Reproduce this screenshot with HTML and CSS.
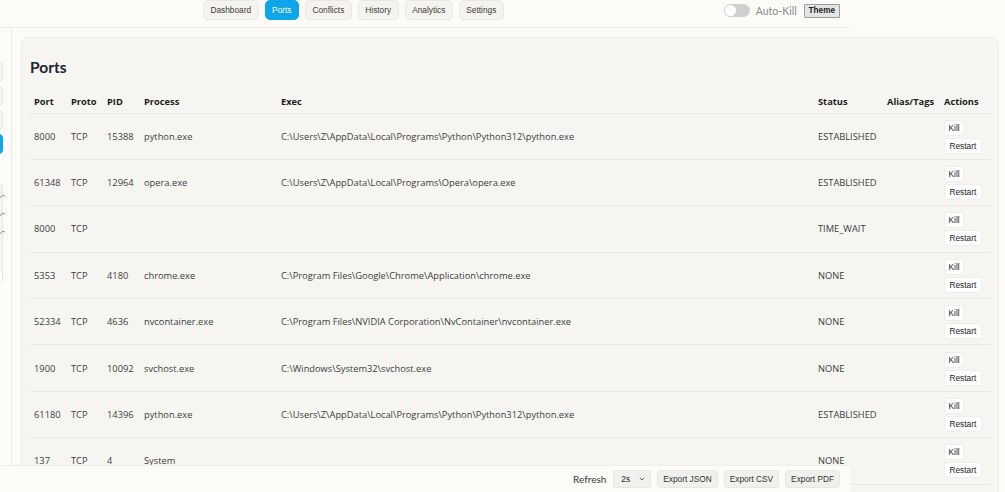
FILE: index.html
```html
<!DOCTYPE html>
<html>
<head>
<meta charset="utf-8">
<link rel="stylesheet" href="styles.css">
</head>
<body>
<header class="topbar">
  <nav class="tabs">
    <button class="tab">Dashboard</button>
    <button class="tab active">Ports</button>
    <button class="tab">Conflicts</button>
    <button class="tab">History</button>
    <button class="tab">Analytics</button>
    <button class="tab">Settings</button>
  </nav>
  <div class="controls">
    <span class="toggle"><span class="knob"></span></span>
    <span class="autokill">Auto-Kill</span>
    <button class="theme">Theme</button>
  </div>
</header>
<div class="layout">
  <aside class="sidebar">
    <div class="side-inner">
      <div class="side-btn"></div>
      <div class="side-btn"></div>
      <div class="side-btn"></div>
      <div class="side-btn on"></div>
      <div class="side-box">
        <svg class="chev" width="8" height="8" viewBox="0 0 8 8"><path d="M1 6 Q4 1 7 3" fill="none" stroke="#888" stroke-width="1"/></svg>
        <svg class="chev" width="8" height="8" viewBox="0 0 8 8"><path d="M1 6 Q4 1 7 3" fill="none" stroke="#888" stroke-width="1"/></svg>
        <svg class="chev" width="8" height="8" viewBox="0 0 8 8"><path d="M1 6 Q4 1 7 3" fill="none" stroke="#888" stroke-width="1"/></svg>
        <div class="side-foot"></div>
      </div>
    </div>
  </aside>
  <main class="main">
    <section class="card">
      <h2 class="title">Ports</h2>
      <table class="ports">
        <colgroup>
          <col class="c-port"><col class="c-proto"><col class="c-pid"><col class="c-proc"><col class="c-exec"><col class="c-status"><col class="c-alias"><col class="c-act">
        </colgroup>
        <thead>
          <tr><th>Port</th><th>Proto</th><th>PID</th><th>Process</th><th>Exec</th><th>Status</th><th>Alias/Tags</th><th>Actions</th></tr>
        </thead>
        <tbody>
          <tr><td>8000</td><td>TCP</td><td>15388</td><td>python.exe</td><td>C:\Users\Z\AppData\Local\Programs\Python\Python312\python.exe</td><td>ESTABLISHED</td><td></td><td class="act"><button class="kill">Kill</button><button class="restart">Restart</button></td></tr>
          <tr><td>61348</td><td>TCP</td><td>12964</td><td>opera.exe</td><td>C:\Users\Z\AppData\Local\Programs\Opera\opera.exe</td><td>ESTABLISHED</td><td></td><td class="act"><button class="kill">Kill</button><button class="restart">Restart</button></td></tr>
          <tr><td>8000</td><td>TCP</td><td></td><td></td><td></td><td>TIME_WAIT</td><td></td><td class="act"><button class="kill">Kill</button><button class="restart">Restart</button></td></tr>
          <tr><td>5353</td><td>TCP</td><td>4180</td><td>chrome.exe</td><td>C:\Program Files\Google\Chrome\Application\chrome.exe</td><td>NONE</td><td></td><td class="act"><button class="kill">Kill</button><button class="restart">Restart</button></td></tr>
          <tr><td>52334</td><td>TCP</td><td>4636</td><td>nvcontainer.exe</td><td>C:\Program Files\NVIDIA Corporation\NvContainer\nvcontainer.exe</td><td>NONE</td><td></td><td class="act"><button class="kill">Kill</button><button class="restart">Restart</button></td></tr>
          <tr><td>1900</td><td>TCP</td><td>10092</td><td>svchost.exe</td><td>C:\Windows\System32\svchost.exe</td><td>NONE</td><td></td><td class="act"><button class="kill">Kill</button><button class="restart">Restart</button></td></tr>
          <tr><td>61180</td><td>TCP</td><td>14396</td><td>python.exe</td><td>C:\Users\Z\AppData\Local\Programs\Python\Python312\python.exe</td><td>ESTABLISHED</td><td></td><td class="act"><button class="kill">Kill</button><button class="restart">Restart</button></td></tr>
          <tr><td>137</td><td>TCP</td><td>4</td><td>System</td><td></td><td>NONE</td><td></td><td class="act"><button class="kill">Kill</button><button class="restart">Restart</button></td></tr>
        </tbody>
      </table>
    </section>
  </main>
</div>
<footer class="bottombar">
  <span class="refresh">Refresh</span>
  <div class="interval"><span>2s</span><svg width="6" height="4" viewBox="0 0 6 4"><path d="M0.8 0.8 L3 3 L5.2 0.8" fill="none" stroke="#555" stroke-width="0.9"/></svg></div>
  <button class="export">Export JSON</button>
  <button class="export">Export CSV</button>
  <button class="export">Export PDF</button>
</footer>
</body>
</html>
```
FILE: styles.css
```css
* { box-sizing: border-box; }
html, body { margin: 0; padding: 0; }
body {
  background: #fcfbf8;
  font-family: Lato, "Liberation Sans", sans-serif;
  color: #3a3a3a;
  overflow: hidden;
  height: 492px;
}
button { font-family: "Liberation Sans", Arial, sans-serif; }

.topbar {
  width: 850px;
  height: 28px;
  display: flex;
  align-items: flex-start;
  padding: 0 10px 0 203px;
  border-bottom: 1px solid #ecebe7;
}
.tabs { display: flex; gap: 6px; }
.tab {
  height: 20px;
  padding: 0 6.5px;
  font-size: 8.3px;
  color: #3c3c3c;
  background: #f4f3f0;
  border: 1px solid #e9e8e4;
  border-radius: 5px;
}
.tab.active {
  background: #0ea5e9;
  border-color: #0ea5e9;
  color: #fff;
}
.controls {
  margin-left: auto;
  display: flex;
  align-items: center;
  height: 21px;
  gap: 6px;
}
.toggle {
  width: 26px;
  height: 13px;
  border-radius: 7px;
  background: #cfcfcf;
  position: relative;
}
.knob {
  position: absolute;
  left: 1px;
  top: 1px;
  width: 11px;
  height: 11px;
  border-radius: 50%;
  background: #fff;
}
.autokill { font-size: 10.5px; color: #8a8a8a; margin-right: 1px; }
.theme {
  height: 14px;
  padding: 0 4px;
  font-size: 8.2px;
  font-weight: bold;
  color: #222;
  background: #e4e4e4;
  border: 1px solid #9b9b9b;
  border-radius: 1px;
}

.layout { display: flex; }
.sidebar {
  width: 12px;
  flex: none;
  height: 470px;
  border-right: 1px solid #ecebe7;
  overflow: hidden;
}
.side-inner {
  width: 120px;
  margin-left: -117px;
  padding-top: 34px;
  display: flex;
  flex-direction: column;
  gap: 4px;
}
.side-btn {
  height: 20px;
  border: 1px solid #e7e6e2;
  background: #f7f6f3;
  border-radius: 4px;
}
.side-btn.on { background: #0ea5e9; border-color: #0ea5e9; }
.side-box {
  margin-top: 26px;
  height: 100px;
  border: 1px solid #e7e6e2;
  background: #f5f4f1;
  border-radius: 4px;
  display: flex;
  flex-direction: column;
  align-items: flex-end;
  padding: 8px 0 0;
  gap: 10px;
}
.chev { display: block; margin-right: -4px; }
.side-foot { margin-top: auto; width: 100%; height: 12px; background: #fff; }

.main { flex: 1; padding: 9px 7px 0 9px; }
.card {
  background: #f6f5f2;
  border: 1px solid #eeede9;
  border-radius: 7px;
  padding: 19px 7px 0 8px;
  height: 480px;
}
.title {
  margin: 0 0 14px;
  font-size: 15.5px;
  line-height: 20px;
  font-weight: 700;
  color: #1c2430;
}
.ports {
  width: 100%;
  border-collapse: collapse;
  font-family: "Open Sans", Lato, sans-serif;
  font-size: 9.3px;
  table-layout: fixed;
}
.c-port { width: 37px; }
.c-proto { width: 36px; }
.c-pid { width: 37px; }
.c-proc { width: 137px; }
.c-exec { width: 537px; }
.c-status { width: 69px; }
.c-alias { width: 57px; }
.c-act { width: 51px; }
.ports th {
  text-align: left;
  font-weight: 700;
  color: #1e1e1e;
  padding: 0 4px;
  height: 22px;
  white-space: nowrap;
  border-bottom: 1px solid #e8e7e3;
}
.ports td {
  padding: 0 4px;
  height: 46.4px;
  white-space: nowrap;
  border-bottom: 1px solid #e8e7e3;
  color: #3d3d3d;
}
.ports td.act { padding-top: 6px; padding-bottom: 5px; }
.kill, .restart {
  display: block;
  height: 16px;
  padding: 0 3.5px;
  font-size: 8.3px;
  color: #222;
  background: #fff;
  border: 1px solid #efeeea;
  border-radius: 3px;
}
.restart { margin-top: 2px; height: 16px; padding: 0 4.5px; }

.bottombar {
  position: fixed;
  left: 0;
  bottom: 0;
  width: 850px;
  height: 27px;
  background: #fcfbf8;
  border-top: 1px solid #efeee9;
  display: flex;
  justify-content: flex-end;
  align-items: center;
  gap: 6px;
  padding-right: 10px;
}
.refresh { font-size: 10px; color: #3a3a3a; margin-right: 1px; }
.interval {
  height: 18px;
  width: 38px;
  font-family: "Liberation Sans", Arial, sans-serif;
  font-size: 8.3px;
  background: #f1f0ed;
  border: 1px solid #e7e6e2;
  border-radius: 4px;
  color: #222;
  padding: 0 5px 0 7px;
  display: flex;
  align-items: center;
  justify-content: space-between;
}
.export {
  height: 18px;
  padding: 0 5px;
  font-size: 8.3px;
  color: #333;
  background: #f1f0ed;
  border: 1px solid #e7e6e2;
  border-radius: 4px;
}
```
